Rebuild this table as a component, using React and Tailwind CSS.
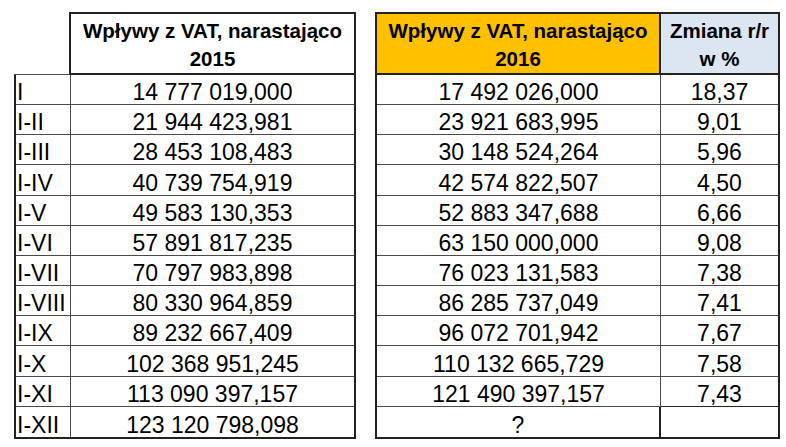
import React from "react";

const labels = ["I", "I-II", "I-III", "I-IV", "I-V", "I-VI", "I-VII", "I-VIII", "I-IX", "I-X", "I-XI", "I-XII"];
const v2015 = [
  "14 777 019,000", "21 944 423,981", "28 453 108,483", "40 739 754,919", "49 583 130,353", "57 891 817,235",
  "70 797 983,898", "80 330 964,859", "89 232 667,409", "102 368 951,245", "113 090 397,157", "123 120 798,098",
];
const v2016 = [
  "17 492 026,000", "23 921 683,995", "30 148 524,264", "42 574 822,507", "52 883 347,688", "63 150 000,000",
  "76 023 131,583", "86 285 737,049", "96 072 701,942", "110 132 665,729", "121 490 397,157", "?",
];
const change = ["18,37", "9,01", "5,96", "4,50", "6,66", "9,08", "7,38", "7,41", "7,67", "7,58", "7,43", ""];

export default function App() {
  return (
    <div className="w-[786px] h-[447px] bg-white text-black pt-[12px] pl-[14px] flex gap-[19px] [font-family:'Liberation_Sans',Arial,sans-serif]">
      {/* Left table */}
      <div className="flex flex-col w-[342px]">
        <div className="flex h-[63px]">
          <div className="w-[55px] border-b border-[#4a4a4a]" />
          <div className="flex-1 border-2 border-[#222] flex flex-col items-center pt-[3px] font-bold text-[20.5px] leading-[28px]">
            <span>Wpływy z VAT, narastająco</span>
            <span>2015</span>
          </div>
        </div>
        <div className="grid grid-cols-[55px_1fr] grid-rows-[repeat(12,minmax(0,1fr))] h-[364px] border-l-2 border-r-2 border-b-2 border-[#222]">
          {labels.map((l, i) => (
            <React.Fragment key={l}>
              <div
                className={`flex items-end pl-[1px] text-[23px] leading-[24px] border-r border-[#4a4a4a] ${
                  i < 11 ? "border-b" : ""
                }`}
              >
                {l}
              </div>
              <div
                className={`flex items-end justify-center text-[23px] leading-[24px] border-[#4a4a4a] ${
                  i < 11 ? "border-b" : ""
                }`}
              >
                {v2015[i]}
              </div>
            </React.Fragment>
          ))}
        </div>
      </div>

      {/* Right table */}
      <div className="flex flex-col w-[405px]">
        <div className="flex h-[63px] border-2 border-[#222] font-bold text-[20.5px] leading-[28px]">
          <div className="w-[284px] bg-[#ffc000] border-r-2 border-[#222] flex flex-col items-center pt-[3px]">
            <span>Wpływy z VAT, narastająco</span>
            <span>2016</span>
          </div>
          <div className="flex-1 bg-[#dce6f1] flex flex-col items-center pt-[3px]">
            <span>Zmiana r/r</span>
            <span>w %</span>
          </div>
        </div>
        <div className="grid grid-cols-[284px_1fr] grid-rows-[repeat(12,minmax(0,1fr))] h-[364px] border-l-2 border-r-2 border-b-2 border-[#222]">
          {v2016.map((v, i) => (
            <React.Fragment key={i}>
              <div
                className={`flex items-end justify-center text-[23px] leading-[24px] ${
                  i < 11 ? "border-b border-r border-[#4a4a4a]" : "border-r-2 border-[#222]"
                }`}
              >
                {v}
              </div>
              <div
                className={`flex items-end justify-center text-[23px] leading-[24px] ${
                  i < 11 ? "border-b border-[#4a4a4a]" : ""
                } ${i === 10 ? "border-[#222]" : ""}`}
              >
                {change[i]}
              </div>
            </React.Fragment>
          ))}
        </div>
      </div>
    </div>
  );
}
